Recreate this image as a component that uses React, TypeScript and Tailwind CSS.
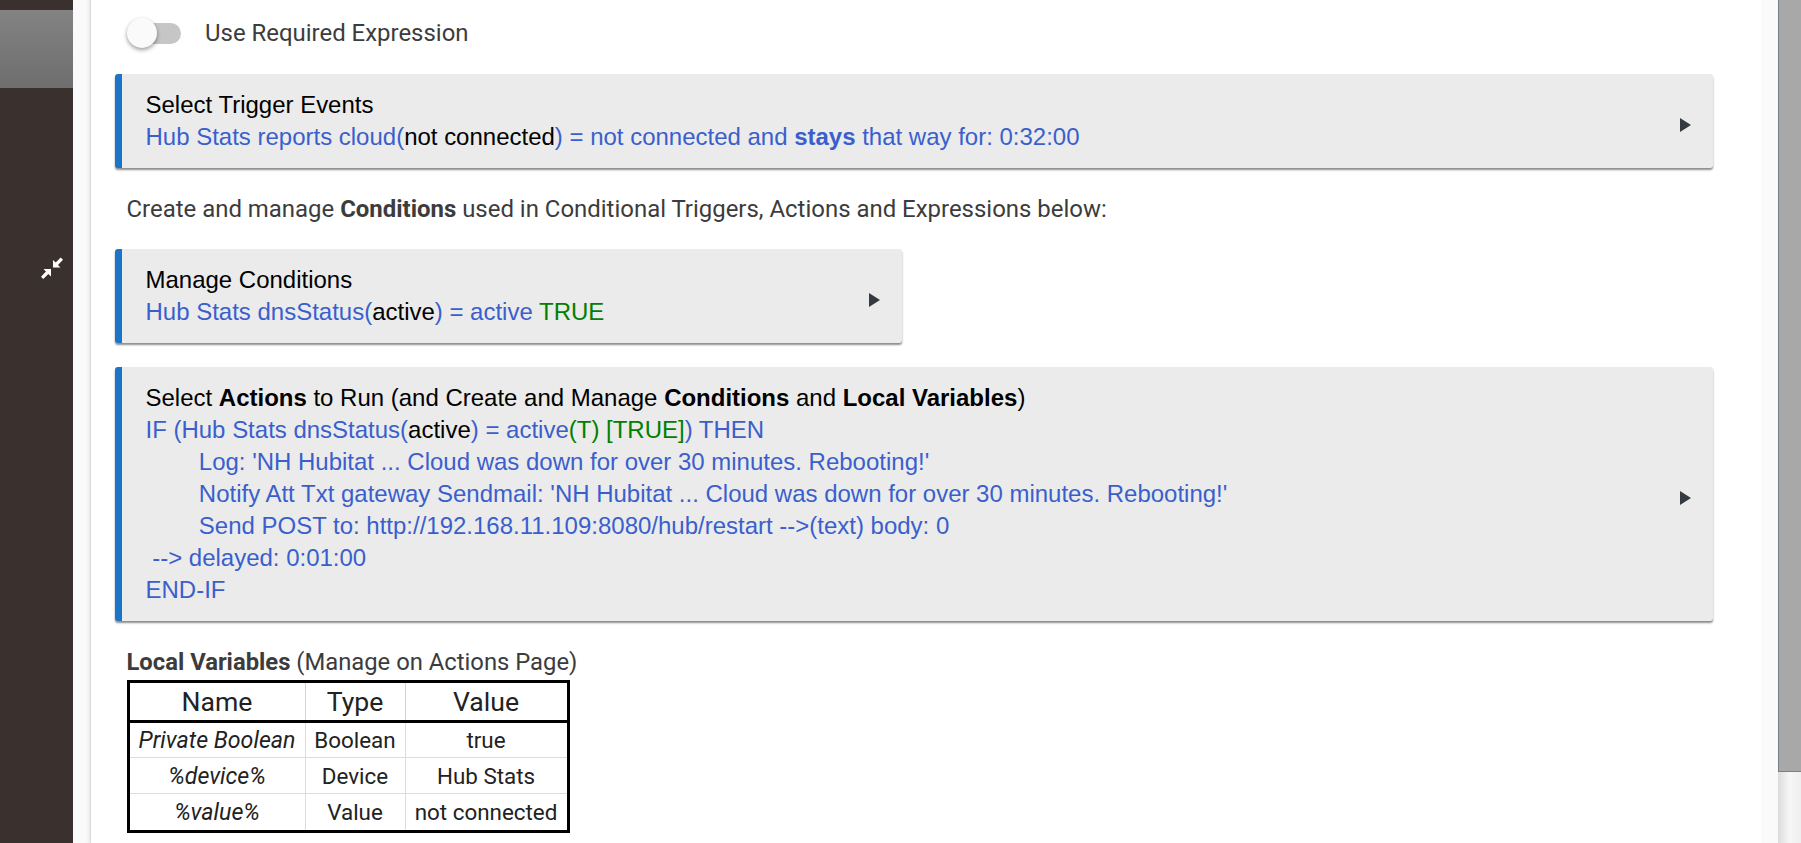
const B = ({ children }: { children: React.ReactNode }) => <span className="font-bold">{children}</span>;
const K = ({ children }: { children: React.ReactNode }) => <span className="text-black">{children}</span>;
const G = ({ children }: { children: React.ReactNode }) => <span className="text-[#008000]">{children}</span>;
import React from "react";

function Card({ lines, title, className }: { lines: React.ReactNode[]; title: React.ReactNode; className: string }) {
  return (
    <div className={`flex items-center justify-between rounded-[3px] border-l-[7px] border-[#1a75c9] bg-[#ebebeb] py-[15px] pl-[23.5px] pr-[22px] font-['Liberation_Sans',sans-serif] text-[23.99px] leading-[32px] text-[#3a5fcd] shadow-[0_2px_2px_rgba(0,0,0,0.45)] ${className}`}>
      <div className="whitespace-pre">
        <div className="text-black">{title}</div>
        {lines.map((l, i) => (
          <div key={i}>{l}</div>
        ))}
      </div>
      <svg width="11" height="14" viewBox="0 0 11 14" className="mt-[8px] shrink-0">
        <polygon points="0,0 11,7 0,14" fill="#343a40" />
      </svg>
    </div>
  );
}

const th = "border-r border-[#d4d4d4] px-0 text-center font-normal text-[26.6px] leading-[30px] last:border-r-0";
const td = "border-r border-t border-[#dcdcdc] text-center leading-[30px] last:border-r-0";

function Row({ n, t, v, first, last }: { n: string; t: string; v: string; first?: boolean; last?: boolean }) {
  return (
    <tr className={last ? "h-[38px]" : "h-[36px]"}>
      <td className={`${td} text-[23.2px] italic ${first ? "border-t-0" : ""}`}>{n}</td>
      <td className={`${td} text-[22.4px] ${first ? "border-t-0" : ""}`}>{t}</td>
      <td className={`${td} text-[22.4px] ${first ? "border-t-0" : ""}`}>{v}</td>
    </tr>
  );
}

export default function App() {
  return (
    <div className="flex h-[843px] w-full overflow-hidden bg-[#fafafa] font-['Roboto',sans-serif]">
      <aside className="flex w-[73px] shrink-0 flex-col bg-[#3a302e]">
        <div className="mt-[10px] h-[78px] bg-gradient-to-b from-[#838383] to-[#6e6e6e]" />
        <div className="mt-[169px] flex justify-end pr-[10px]">
          <svg width="22" height="22" viewBox="0 0 22 22" fill="#fff">
            <path d="M22 2.8 19.7.5l-5 5L12 3v7.5h7.5L17 8z" />
            <path d="M0 19.7l2.3 2.3 5-5 2.7 2.5V12H2.5L5 14.5z" />
          </svg>
        </div>
      </aside>
      <div className="w-[18px] shrink-0 bg-gradient-to-r from-[#fafafa] from-70% to-[#ececec]" />
      <main className="w-[1670px] shrink-0 bg-white pl-[24px] pr-[48px] shadow-[0_0_2px_rgba(0,0,0,0.25)]">
        <div className="flex h-[74px] items-start pl-[12px] pt-[18px]">
          <div className="relative h-[30px] w-[54px] shrink-0">
            <div className="absolute left-[8px] top-[5px] h-[21px] w-[46px] rounded-full bg-[#c6c6c6]" />
            <div className="absolute left-0 top-0 h-[30px] w-[30px] rounded-full bg-[#fafafa] shadow-[0_2px_4px_rgba(0,0,0,0.4)]" />
          </div>
          <span className="ml-[24px] text-[23.95px] leading-[30px] text-[#3c3c3c]">Use Required Expression</span>
        </div>
        <Card
          className="w-[1598px]"
          title="Select Trigger Events"
          lines={[
            <>Hub Stats reports cloud(<K>not connected</K>) = not connected and <B>stays</B> that way for: 0:32:00</>,
          ]}
        />
        <p className="flex h-[81px] items-center pl-[11.5px] pt-[2px] text-[23.95px] text-[#3c3c3c]">
          <span>Create and manage <B>Conditions</B> used in Conditional Triggers, Actions and Expressions below:</span>
        </p>
        <Card
          className="w-[787px]"
          title="Manage Conditions"
          lines={[
            <>Hub Stats dnsStatus(<K>active</K>) = active <G>TRUE</G></>,
          ]}
        />
        <div className="h-[24px]" />
        <Card
          className="w-[1598px]"
          title={<>Select <B>Actions</B> to Run (and Create and Manage <B>Conditions</B> and <B>Local Variables</B>)</>}
          lines={[
            <>IF (Hub Stats dnsStatus(<K>active</K>) = active<G>(T) [TRUE]</G>) THEN</>,
            <>{"\u00a0\u00a0\u00a0\u00a0\u00a0\u00a0\u00a0\u00a0"}Log: 'NH Hubitat ... Cloud was down for over 30 minutes. Rebooting!'</>,
            <>{"\u00a0\u00a0\u00a0\u00a0\u00a0\u00a0\u00a0\u00a0"}Notify Att Txt gateway Sendmail: 'NH Hubitat ... Cloud was down for over 30 minutes. Rebooting!'</>,
            <>{"\u00a0\u00a0\u00a0\u00a0\u00a0\u00a0\u00a0\u00a0"}Send POST to: http://192.168.11.109:8080/hub/restart --&gt;(text) body: 0</>,
            <>{"\u00a0"}--&gt; delayed: 0:01:00</>,
            <>END-IF</>,
          ]}
        />
        <div className="pl-[11.5px]">
          <div className="mb-[2px] mt-[25px] text-[23.8px] leading-[32px] text-[#3c3c3c]">
            <B>Local Variables</B> (Manage on Actions Page)
          </div>
          <table className="w-[440px] table-fixed border-collapse border-[3px] border-black text-[#222222]">
            <colgroup>
              <col className="w-[177px]" />
              <col className="w-[100px]" />
              <col className="w-[163px]" />
            </colgroup>
            <thead>
              <tr className="h-[40px] border-b-[3px] border-black">
                <th className={th}>Name</th>
                <th className={th}>Type</th>
                <th className={th}>Value</th>
              </tr>
            </thead>
            <tbody>
              <Row first n="Private Boolean" t="Boolean" v="true" />
              <Row n="%device%" t="Device" v="Hub Stats" />
              <Row last n="%value%" t="Value" v="not connected" />
            </tbody>
          </table>
        </div>
      </main>
      <div className="w-[17px] shrink-0 bg-[#fafafa]" />
      <div className="flex w-[23px] shrink-0 flex-col bg-gradient-to-r from-[#dcdcdc] via-[#f6f6f6] to-[#efefef]">
        <div className="h-[772px] border-b border-l border-[#76808c] bg-[#a8a8a8]" />
      </div>
    </div>
  );
}
